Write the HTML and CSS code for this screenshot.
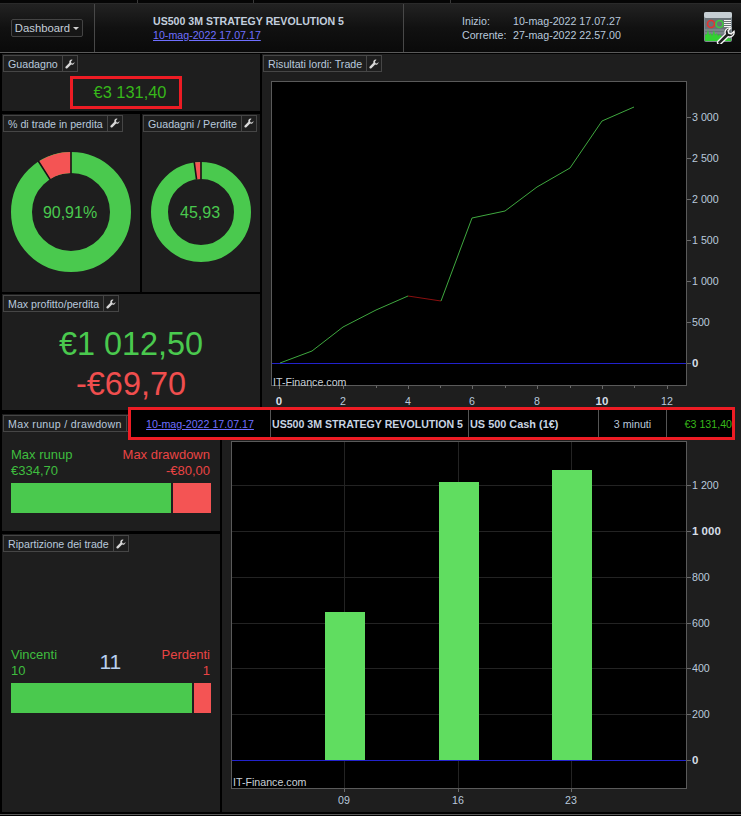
FILE: index.html
```html
<!DOCTYPE html>
<html lang="it">
<head>
<meta charset="utf-8">
<title>Dashboard</title>
<link rel="stylesheet" href="styles.css">
</head>
<body>
<svg class="defs" width="0" height="0" aria-hidden="true">
  <symbol id="wrench" viewBox="0 0 12 12">
    <path d="M8.2 0.6a3 3 0 0 0-2.9 4L0.9 9a1.4 1.4 0 0 0 2 2l4.5-4.4a3 3 0 0 0 4-3L9.6 5.4 7.7 5 7.2 3l1.900-2.200z" fill="#d8d8d8"/>
  </symbol>
</svg>
<div class="app">
  <div class="strip"><i class="s1"></i><i class="s2"></i><i class="s3"></i></div>
  <header class="header">
    <div class="h-dash"><button class="dash">Dashboard <span class="caret"></span></button></div>
    <div class="h-title">
      <div class="title">US500 3M STRATEGY REVOLUTION 5</div>
      <a class="link" href="#">10-mag-2022 17.07.17</a>
    </div>
    <div class="h-info">
      <div class="info">
        <span>Inizio:</span><span>10-mag-2022 17.07.27</span>
        <span>Corrente:</span><span>27-mag-2022 22.57.00</span>
      </div>
      <svg class="appicon" width="32" height="33" viewBox="0 0 32 33">
        <rect x="1" y="1" width="28" height="30" rx="2" fill="#7f8a90"/>
        <rect x="1" y="1" width="28" height="6" rx="2" fill="#c6ced3"/>
        <rect x="2" y="7" width="26" height="23" fill="#6a7378"/>
        <circle cx="8" cy="13" r="3.500" fill="none" stroke="#e8312d" stroke-width="1.600"/>
        <circle cx="16.500" cy="13" r="3.500" fill="none" stroke="#3ccc3c" stroke-width="1.600"/>
        <path d="M21 9.500h7M21 11.500h7M21 13.500h7M21 15.500h7" stroke="#f4f4f4" stroke-width="1"/>
        <path d="M2 19h19M2 22h19" stroke="#8d979c" stroke-width="1"/>
        <path d="M2 30v-6l2-1 1-5 1 6 2-2 1 3 2-6 1 5 2-2 1 3 2-2 1 2 10 3v2z" fill="#33d033"/>
        <g transform="translate(3 4) scale(.9)">
          <path d="M13 29.500l8.500-8.500a5 5 0 0 1 6-6.500l-3 3 .8 2.800 2.800.8 3-3a5 5 0 0 1-6.500 6l-8.500 8.500a2.300 2.300 0 0 1-3.100-3.100z" fill="#222" stroke="#f6f6f6" stroke-width="1.500"/>
        </g>
      </svg>
    </div>
  </header>

  <main class="board">
    <div class="top">
      <div class="top-left">
        <section class="panel gain">
          <div class="tab"><span class="tab-l">Guadagno</span><span class="tab-w"><svg width="11" height="11"><use href="#wrench"/></svg></span></div>
          <div class="gain-box">€3 131,40</div>
        </section>
        <div class="donuts">
          <section class="panel">
            <div class="tab"><span class="tab-l">% di trade in perdita</span><span class="tab-w"><svg width="11" height="11"><use href="#wrench"/></svg></span></div>
            <svg class="chart" width="138" height="160" viewBox="2 132 138 160">
              <g transform="translate(71 212)">
                <circle r="49.500" class="ring" stroke-width="21"/>
                <path d="M-32.400-50.500A60 60 0 0 1 0-60V-39A39 39 0 0 0-21.070-32.800Z" class="loss"/>
                <path d="M0-60.500V-38.500M-32.700-51-20.800-32.400" class="cut"/>
                <text x="-1" y="6" class="donut-t">90,91%</text>
              </g>
            </svg>
          </section>
          <section class="panel">
            <div class="tab"><span class="tab-l">Guadagni / Perdite</span><span class="tab-w"><svg width="11" height="11"><use href="#wrench"/></svg></span></div>
            <svg class="chart" width="118" height="160" viewBox="142 132 118 160">
              <g transform="translate(201 212)">
                <circle r="41.500" class="ring" stroke-width="17"/>
                <path d="M-6.700-49.550A50 50 0 0 1 0-50V-33A33 33 0 0 0-4.420-32.700Z" class="loss"/>
                <path d="M0-50.500V-32.500M-6.800-50.100-4.400-32.400" class="cut"/>
                <text x="-1" y="6" class="donut-t">45,93</text>
              </g>
            </svg>
          </section>
        </div>
        <section class="panel extremes">
          <div class="tab"><span class="tab-l">Max profitto/perdita</span><span class="tab-w"><svg width="11" height="11"><use href="#wrench"/></svg></span></div>
          <div class="big win">€1 012,50</div>
          <div class="big lose">-€69,70</div>
        </section>
      </div>
      <section class="panel top-right">
        <div class="tab"><span class="tab-l">Risultati lordi: Trade</span><span class="tab-w"><svg width="11" height="11"><use href="#wrench"/></svg></span></div>
        <svg class="chart" width="479" height="338" viewBox="262 72 479 338">
          <rect x="271.500" y="81.500" width="415" height="304" class="frame"/>
          <path d="M272 363.500H686" class="zero"/>
          <path d="M280 363 312 351 343 327 376 310 408 296" class="line-up"/>
          <path d="M408 296 441 301" class="line-down"/>
          <path d="M441 301 472 218 505 211 537 187 570 168 602 121 634 107" class="line-up"/>
          <path d="M279.500 386v3M311.500 386v2M343.500 386v3M376.500 386v2M408.500 386v3M440.500 386v2M472.500 386v3M505.500 386v2M537.500 386v3M570.500 386v2M602.500 386v3M634.500 386v2M667.500 386v3M687 363.500h4M687 322.500h4M687 281.500h4M687 240.500h4M687 199.500h4M687 158.500h4M687 117.500h4" class="tick"/>
          <text x="273" y="386" class="brand">IT-Finance.com</text>
          <g class="ax-x">
            <text x="279" y="405" class="strong">0</text><text x="343" y="405">2</text><text x="408" y="405">4</text><text x="472" y="405">6</text><text x="537" y="405">8</text><text x="602" y="405" class="strong">10</text><text x="667" y="405">12</text>
          </g>
          <g class="ax-y">
            <text x="692" y="367" class="strong">0</text><text x="692" y="326">500</text><text x="692" y="285">1 000</text><text x="692" y="244">1 500</text><text x="692" y="203">2 000</text><text x="692" y="162">2 500</text><text x="692" y="121">3 000</text>
          </g>
        </svg>
      </section>
    </div>

    <div class="bottom">
      <div class="bottom-left">
        <section class="panel runup">
          <div class="tab"><span class="tab-l tab-wide">Max runup / drawdown</span><span class="tab-w"><svg width="11" height="11"><use href="#wrench"/></svg></span></div>
          <div class="split">
            <div class="win-t"><div>Max runup</div><div>€334,70</div></div>
            <div class="lose-t"><div>Max drawdown</div><div>-€80,00</div></div>
          </div>
          <div class="bar"><span class="b-win" style="width:160px"></span><span class="b-lose"></span></div>
        </section>
        <section class="panel trades">
          <div class="tab"><span class="tab-l">Ripartizione dei trade</span><span class="tab-w"><svg width="11" height="11"><use href="#wrench"/></svg></span></div>
          <div class="split split-t">
            <div class="win-t"><div>Vincenti</div><div>10</div></div>
            <div class="count">11</div>
            <div class="lose-t"><div>Perdenti</div><div>1</div></div>
          </div>
          <div class="bar"><span class="b-win" style="width:181px"></span><span class="b-lose"></span></div>
        </section>
      </div>
      <section class="panel bottom-right">
        <svg class="chart" width="519" height="402" viewBox="222 410 519 402">
          <rect x="231.500" y="441.500" width="455" height="347" class="frame"/>
          <path d="M344.500 442V788M458.500 442V788M571.500 442V788M232 485.500H686M232 531.500H686M232 577.500H686M232 623.500H686M232 668.500H686M232 714.500H686" class="grid"/>
          <rect x="325" y="612" width="40" height="149" class="bar-v"/>
          <rect x="439" y="482" width="40" height="279" class="bar-v"/>
          <rect x="552" y="470" width="40" height="291" class="bar-v"/>
          <path d="M232 760.500H686" class="zero"/>
          <path d="M344.500 789v3M458.500 789v3M571.500 789v3M687 760.500h4M687 714.500h4M687 668.500h4M687 623.500h4M687 577.500h4M687 531.500h4M687 485.500h4" class="tick"/>
          <text x="233" y="786" class="brand">IT-Finance.com</text>
          <g class="ax-x">
            <text x="344" y="804">09</text><text x="458" y="804">16</text><text x="571" y="804">23</text>
          </g>
          <g class="ax-y">
            <text x="692" y="764" class="strong">0</text><text x="692" y="718">200</text><text x="692" y="672">400</text><text x="692" y="627">600</text><text x="692" y="581">800</text><text x="692" y="535" class="strong">1 000</text><text x="692" y="489">1 200</text>
          </g>
        </svg>
      </section>
    </div>
  </main>
  <div class="footline"></div>

  <div class="row-over">
    <div class="c c-date"><a class="link" href="#">10-mag-2022 17.07.17</a></div>
    <div class="c c-name">US500 3M STRATEGY REVOLUTION 5</div>
    <div class="c c-sym">US 500 Cash (1€)</div>
    <div class="c c-tf">3 minuti</div>
    <div class="c c-val">€3 131,40</div>
  </div>
</div>
</body>
</html>
```
FILE: styles.css
```css
* { box-sizing: border-box; }
html, body { margin: 0; padding: 0; background: #000; }
body { font-family: "Liberation Sans", Arial, sans-serif; font-size: 10.670px; color: #b9c9dc; overflow: hidden; }
.defs { position: absolute; }
.app { position: relative; width: 741px; height: 816px; background: #000; overflow: hidden; }

.strip { display: flex; height: 3px; background: #050505; }
.strip i { display: block; height: 3px; border-right: 1px solid #3a3a3a; }
.s1 { width: 138px; }
.s2 { width: 116px; }
.s3 { width: 197px; }

.header { display: flex; height: 50px; border-bottom: 1px solid #5a5a5a; background: linear-gradient(#222 0%, #111 50%, #0a0a0a 100%); border-top: 1px solid #2a2a2a; }
.h-dash { width: 95px; border-right: 1px solid #484848; display: flex; align-items: flex-start; padding: 15px 0 0 11px; }
.dash { width: 72px; height: 18px; padding: 0; background: #161616; border: 1px solid #444; border-radius: 2px; color: #c4cdd8; font: 11.300px "Liberation Sans", Arial, sans-serif; }
.caret { display: inline-block; width: 0; height: 0; border-left: 3.500px solid transparent; border-right: 3.500px solid transparent; border-top: 3.500px solid #d0d0d0; vertical-align: 2px; }
.h-title { width: 309px; border-right: 1px solid #484848; padding: 10px 0 0 58px; display: flex; flex-direction: column; align-items: flex-start; }
.title { font-weight: bold; font-size: 10.600px; line-height: 14px; color: #c2cede; white-space: nowrap; }
.link { color: #6f6fff; text-decoration: underline; line-height: 14px; font-size: 10.670px; white-space: nowrap; }
.h-info { flex: 1; display: flex; justify-content: space-between; padding-left: 58px; }
.info { display: grid; grid-template-columns: 51px auto; grid-auto-rows: 14px; padding-top: 10px; line-height: 14px; white-space: nowrap; }
.appicon { margin: 7px 6px 0 0; }

.board { display: flex; flex-direction: column; height: 759px; margin-top: 1px; padding-left: 2px; }
.top { display: flex; gap: 2px; height: 356px; }
.top-left { width: 258px; display: grid; grid-template-rows: 57px 178px 116px; row-gap: 2.500px; }
.top-right { flex: 1; }
.bottom { display: flex; gap: 2px; margin-top: 4px; height: 398px; }
.bottom-left { width: 218px; display: grid; grid-template-rows: 117px 278px; row-gap: 3px; }
.bottom-right { flex: 1; margin-top: -4px; height: 402px; }
.panel { background: #1e1e1e; min-width: 0; }

.tab { display: inline-flex; height: 17px; margin: 1px 0 0 1px; border: 1px solid #464646; vertical-align: top; white-space: nowrap; }
.tab-l { padding: 0 4px; line-height: 16px; }
.tab-wide { letter-spacing: 0.300px; }
.tab-w { width: 15px; border-left: 1px solid #464646; display: flex; align-items: center; justify-content: center; }
.tab-w svg { width: 10px; height: 10px; }

.gain-box { width: 112px; height: 33px; margin: 4px 0 0 68px; border: 3px solid #ed1c24; padding-left: 8px; text-align: center; font-size: 16.400px; line-height: 27px; color: #37b81a; white-space: nowrap; }

.donuts { display: grid; grid-template-columns: 138px 118px; column-gap: 2px; }
.chart { display: block; }
.ring { fill: none; stroke: #4ac94e; }
.loss { fill: #f45454; }
.cut { stroke: #151515; stroke-width: 1.600; fill: none; }
.donut-t { font-size: 16px; fill: #4ac94e; text-anchor: middle; }

.big { font-size: 32.400px; line-height: 40px; text-align: center; white-space: nowrap; }
.win { color: #4ac94e; margin-top: 12px; }
.lose { color: #f04e4e; }

.split { display: flex; justify-content: space-between; padding: 0 10px 0 9px; margin-top: 15px; font-size: 13px; line-height: 16px; }
.split-t { margin-top: 95px; align-items: center; }
.win-t { color: #3fbd3f; }
.lose-t { color: #e94444; text-align: right; }
.count { font-size: 21px; line-height: 24px; color: #b9d0ee; padding: 0 0 2px 2px; }
.bar { display: flex; gap: 2px; width: 200px; height: 30px; margin: 4px 0 0 9px; }
.b-win { background: #4ac94e; }
.b-lose { background: #f45454; flex: 1; }

.frame { fill: #000; stroke: #5a5a5a; stroke-width: 1; }
.zero { stroke: #2222cc; stroke-width: 1; fill: none; }
.line-up { stroke: #3fa83f; stroke-width: 1; fill: none; }
.line-down { stroke: #8a0f0f; stroke-width: 1; fill: none; }
.tick { stroke: #6a6a6a; stroke-width: 1; fill: none; }
.grid { stroke: #232323; stroke-width: 1; fill: none; }
.bar-v { fill: #60dd60; }
.brand { font-size: 10.670px; fill: #c8d0d8; }
.ax-x text { font-size: 10.670px; fill: #b9c9dc; text-anchor: middle; }
.ax-y text { font-size: 10.670px; fill: #b9c9dc; }
.ax-x .strong, .ax-y .strong { font-weight: bold; font-size: 11.500px; fill: #d5dde6; }

.row-over { position: absolute; left: 128px; top: 407px; width: 607px; height: 33px; border: 3px solid #ed1c24; background: #000; display: grid; grid-template-columns: 139px 198px 130px 68px 1fr; align-items: stretch; white-space: nowrap; }
.c { display: flex; align-items: center; border-left: 1px solid #555; line-height: 14px; overflow: hidden; }
.c-date { border-left: 0; justify-content: center; padding-right: 1px; }
.c-name { font-weight: bold; font-size: 10.600px; color: #c8d4e2; padding-left: 1px; }
.c-sym { font-weight: bold; font-size: 10.900px; color: #c8d4e2; padding-left: 1px; }
.c-tf { justify-content: center; }
.c-val { justify-content: flex-end; color: #37b81a; }
.footline { height: 1px; background: #5a5a5a; margin-top: 1px; }
```
